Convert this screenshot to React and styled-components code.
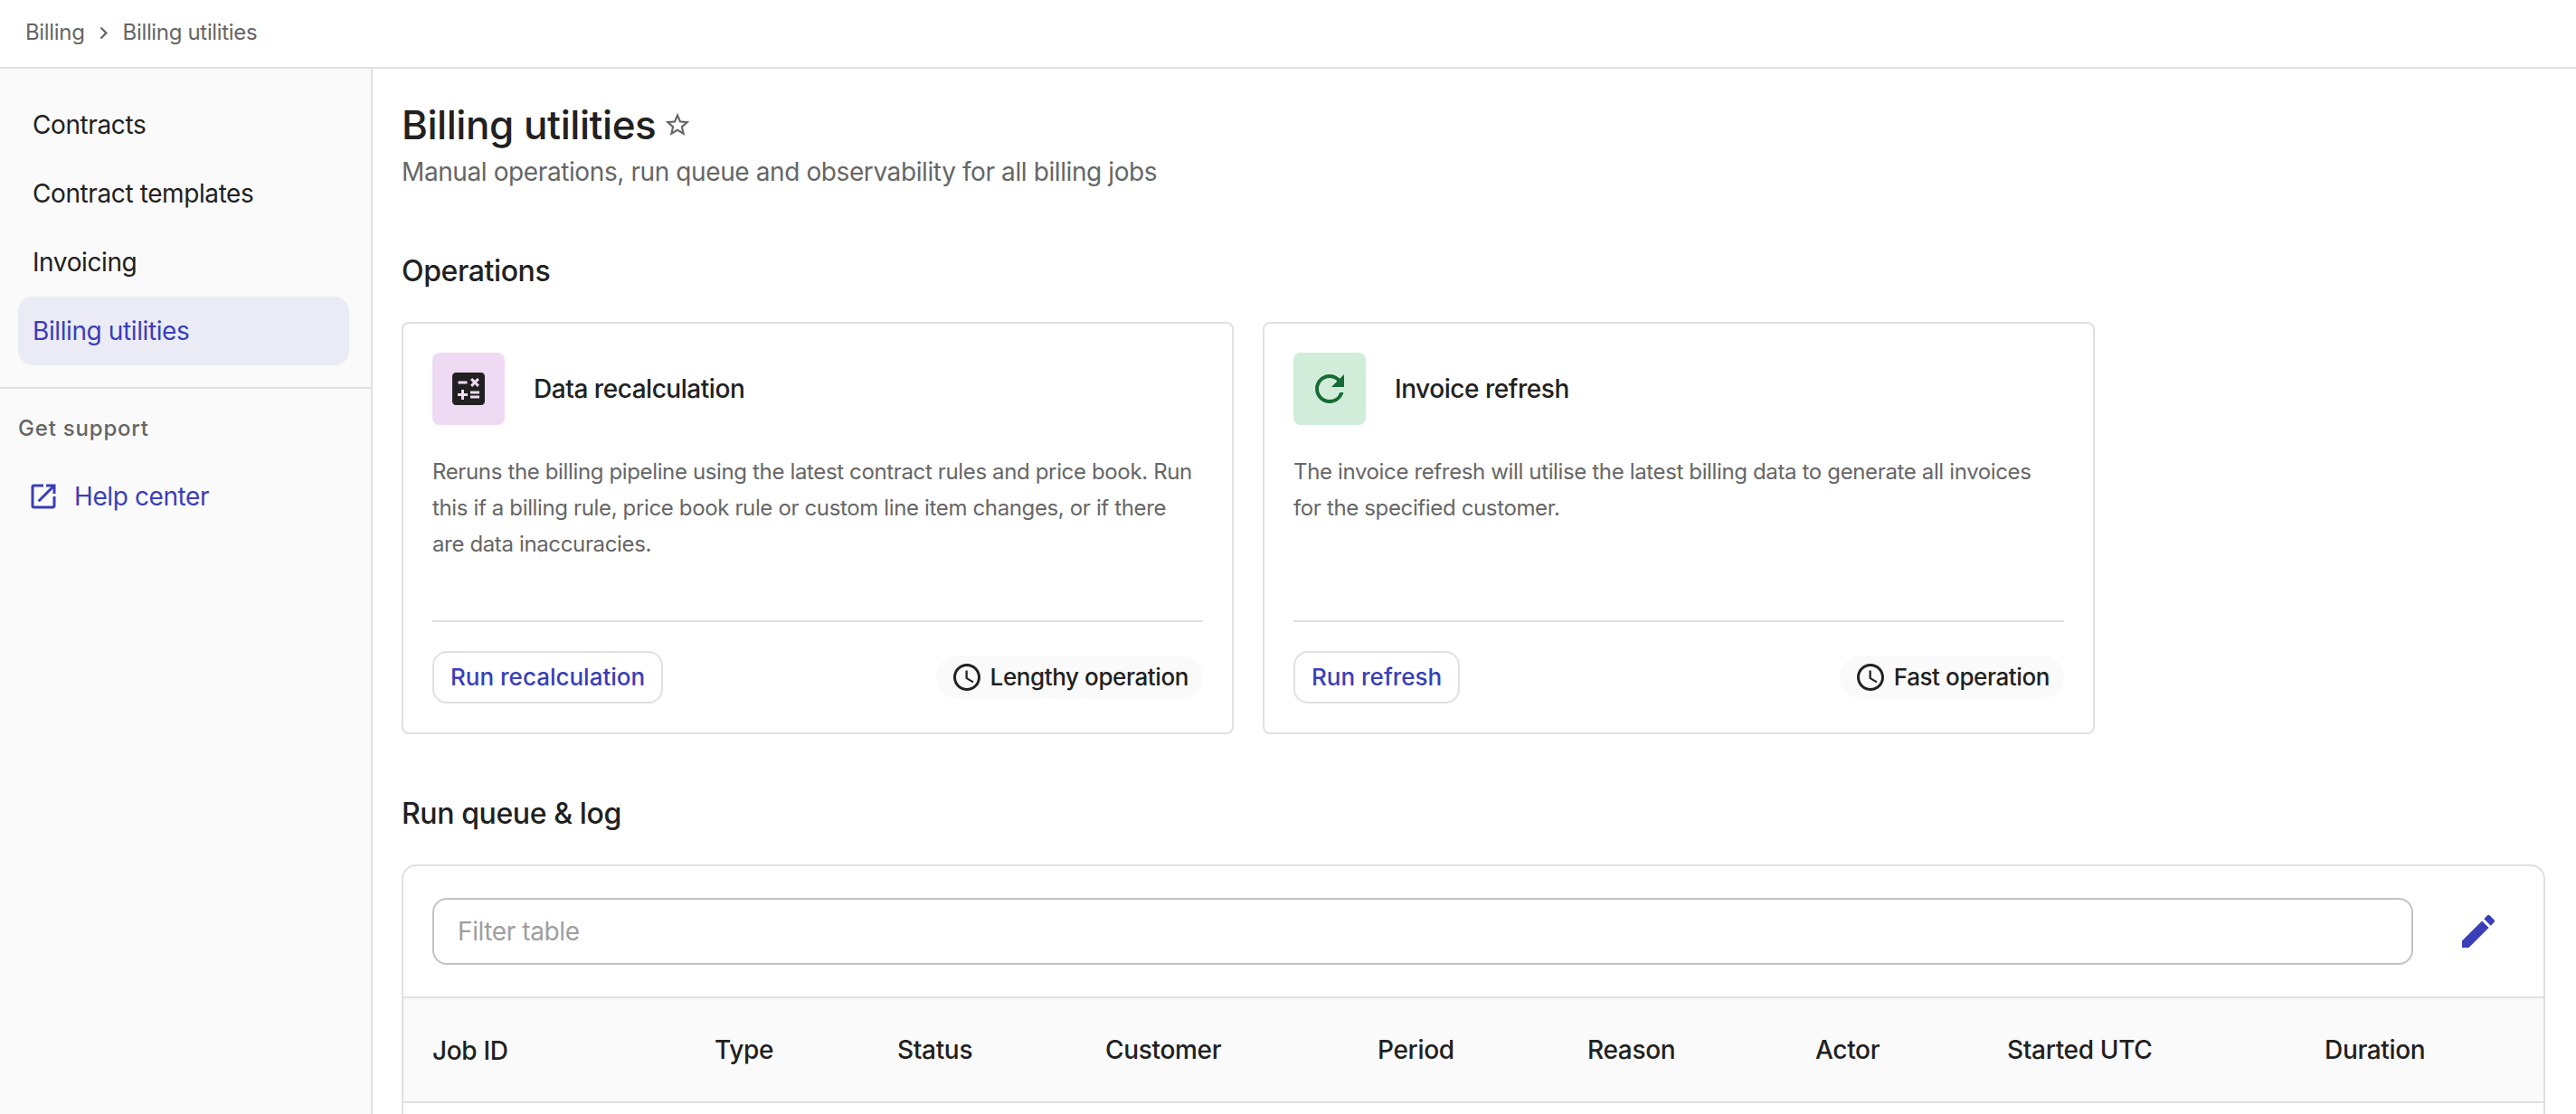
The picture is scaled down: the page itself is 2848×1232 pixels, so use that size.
import React from 'react';
import styled, { createGlobalStyle } from 'styled-components';
import {
  MdAccessTime,
  MdCalculate,
  MdChevronRight,
  MdEdit,
  MdOpenInNew,
  MdRefresh,
  MdStarBorder,
} from 'react-icons/md';

const navItems = ['Contracts', 'Contract templates', 'Invoicing', 'Billing utilities'];

const operations = [
  {
    title: 'Data recalculation',
    text: 'Reruns the billing pipeline using the latest contract rules and price book. Run this if a billing rule, price book rule or custom line item changes, or if there are data inaccuracies.',
    action: 'Run recalculation',
    speed: 'Lengthy operation',
    icon: <MdCalculate />,
    color: '#212121',
    background: '#eedbf3',
  },
  {
    title: 'Invoice refresh',
    text: 'The invoice refresh will utilise the latest billing data to generate all invoices for the specified customer.',
    action: 'Run refresh',
    speed: 'Fast operation',
    icon: <MdRefresh />,
    color: '#176b34',
    background: '#d1edda',
  },
];

const columns = ['Job ID', 'Type', 'Status', 'Customer', 'Period', 'Reason', 'Actor', 'Started UTC', 'Duration'];

export default function App() {
  return (
    <Page>
      <GlobalStyle />
      <Breadcrumbs>
        <Crumb>Billing</Crumb>
        <MdChevronRight />
        <Crumb>Billing utilities</Crumb>
      </Breadcrumbs>
      <Body>
        <Sidebar>
          <Nav>
            {navItems.map(item => (
              <NavItem key={item} $active={item === 'Billing utilities'}>{item}</NavItem>
            ))}
          </Nav>
          <Support>
            <SupportTitle>Get support</SupportTitle>
            <HelpLink>
              <MdOpenInNew />
              Help center
            </HelpLink>
          </Support>
        </Sidebar>
        <Main>
          <TitleRow>
            <Title>Billing utilities</Title>
            <MdStarBorder />
          </TitleRow>
          <Subtitle>Manual operations, run queue and observability for all billing jobs</Subtitle>
          <SectionTitle>Operations</SectionTitle>
          <Cards>
            {operations.map(op => (
              <Card key={op.title}>
                <CardHeader>
                  <IconTile $color={op.color} $background={op.background}>{op.icon}</IconTile>
                  <CardTitle>{op.title}</CardTitle>
                </CardHeader>
                <CardText>{op.text}</CardText>
                <CardFooter>
                  <ActionButton>{op.action}</ActionButton>
                  <Chip>
                    <MdAccessTime />
                    <ChipLabel>{op.speed}</ChipLabel>
                  </Chip>
                </CardFooter>
              </Card>
            ))}
          </Cards>
          <SectionTitle>Run queue &amp; log</SectionTitle>
          <Panel>
            <Toolbar>
              <FilterInput placeholder="Filter table" />
              <EditButton aria-label="Edit columns">
                <MdEdit />
              </EditButton>
            </Toolbar>
            <HeaderRow>
              {columns.map(column => (
                <HeaderCell key={column}>{column}</HeaderCell>
              ))}
            </HeaderRow>
          </Panel>
        </Main>
      </Body>
    </Page>
  );
}

const GlobalStyle = createGlobalStyle`
  * {
    box-sizing: border-box;
  }

  body {
    margin: 0;
    background: #ffffff;
    color: #212121;
    font-family: Inter, sans-serif;
    letter-spacing: -0.4px;
  }

  svg {
    flex-shrink: 0;
  }
`;

const Page = styled.div`
  display: flex;
  flex-direction: column;
  height: 1232px;
  overflow: hidden;
`;

const Breadcrumbs = styled.div`
  display: flex;
  align-items: center;
  flex-shrink: 0;
  height: 76px;
  padding: 0 28px 4px;
  border-bottom: 2px solid #e0e0e0;
  color: #666666;
  font-size: 24px;
  letter-spacing: -0.33px;

  svg {
    width: 27px;
    height: 27px;
    margin: 2px 8px 0 7px;
  }
`;

const Crumb = styled.span`
  white-space: nowrap;
`;

const Body = styled.div`
  display: flex;
  flex: 1;
  min-height: 0;
`;

const Sidebar = styled.div`
  flex-shrink: 0;
  width: 412px;
  border-right: 2px solid #e0e0e0;
  background: #fafafa;
`;

const Nav = styled.div`
  padding: 24px 24px 24px 20px;
  border-bottom: 2px solid #e0e0e0;
`;

const NavItem = styled.div`
  display: flex;
  align-items: center;
  height: 76px;
  padding: 0 16px;
  border-radius: 16px;
  background: ${props => (props.$active ? '#ebebf5' : 'transparent')};
  color: ${props => (props.$active ? '#3a3eb8' : '#212121')};
  font-size: 28px;
`;

const Support = styled.div`
  padding: 24px 20px;
`;

const SupportTitle = styled.div`
  color: #666666;
  font-size: 24px;
  font-weight: 500;
  line-height: 40px;
  letter-spacing: 0.8px;
`;

const HelpLink = styled.div`
  display: flex;
  align-items: center;
  gap: 16px;
  height: 76px;
  margin-top: 17px;
  padding-left: 10px;
  color: #3a3eb8;
  font-size: 28px;

  svg {
    width: 36px;
    height: 36px;
  }
`;

const Main = styled.div`
  flex: 1;
  padding: 32px 34px 0 32px;
`;

const TitleRow = styled.div`
  display: flex;
  align-items: center;
  gap: 8px;
  height: 60px;

  svg {
    width: 32px;
    height: 32px;
    color: #666666;
  }
`;

const Title = styled.h1`
  margin: 0;
  font-size: 44px;
  font-weight: 500;
  letter-spacing: -0.45px;
`;

const Subtitle = styled.p`
  margin: 0 0 64px;
  color: #666666;
  font-size: 28px;
  line-height: 44px;
`;

const SectionTitle = styled.h2`
  margin: 0 0 32px;
  font-size: 32px;
  font-weight: 500;
  line-height: 48px;
`;

const Cards = styled.div`
  display: grid;
  grid-template-columns: 920px 920px;
  gap: 32px;
  margin-bottom: 64px;
`;

const Card = styled.div`
  display: flex;
  flex-direction: column;
  height: 456px;
  padding: 32px;
  border: 2px solid #e0e0e0;
  border-radius: 8px;
`;

const CardHeader = styled.div`
  display: flex;
  align-items: center;
  gap: 32px;
`;

const IconTile = styled.div`
  display: flex;
  align-items: center;
  justify-content: center;
  width: 80px;
  height: 80px;
  border-radius: 8px;
  background: ${props => props.$background};
  color: ${props => props.$color};

  svg {
    width: 48px;
    height: 48px;
  }
`;

const CardTitle = styled.h3`
  margin: 0;
  font-size: 28px;
  font-weight: 500;
  letter-spacing: -0.46px;
`;

const CardText = styled.p`
  flex: 1;
  margin: 32px 0 0;
  padding-right: 8px;
  color: #666666;
  font-size: 24px;
  line-height: 40px;
  letter-spacing: -0.36px;
`;

const CardFooter = styled.div`
  display: flex;
  align-items: center;
  justify-content: space-between;
  padding-top: 32px;
  border-top: 2px solid #e0e0e0;
`;

const ActionButton = styled.button`
  height: 58px;
  padding: 0 18px 2px;
  border: 2px solid #e0e0e0;
  border-radius: 16px;
  background: #ffffff;
  color: #3a3eb8;
  font-family: inherit;
  font-size: 26px;
  font-weight: 500;
`;

const Chip = styled.div`
  display: flex;
  align-items: center;
  gap: 8px;
  height: 48px;
  padding: 0 16px;
  border-radius: 24px;
  background: #fafafa;
  font-size: 26px;
  font-weight: 500;

  svg {
    width: 36px;
    height: 36px;
  }
`;

const ChipLabel = styled.span`
  padding-bottom: 2px;
`;

const Panel = styled.div`
  height: 400px;
  border: 2px solid #e0e0e0;
  border-radius: 16px;
`;

const Toolbar = styled.div`
  display: flex;
  align-items: center;
  gap: 32px;
  height: 146px;
  padding: 0 32px;
  border-bottom: 2px solid #e0e0e0;
`;

const FilterInput = styled.input`
  flex: 1;
  height: 74px;
  padding: 0 26px;
  border: 2px solid #c2c2c2;
  border-radius: 16px;
  font-family: inherit;
  font-size: 28px;
  letter-spacing: inherit;

  &::placeholder {
    color: #9e9e9e;
  }
`;

const EditButton = styled.button`
  display: flex;
  padding: 16px;
  border: none;
  background: none;
  color: #3a3eb8;

  svg {
    width: 48px;
    height: 48px;
  }
`;

const HeaderRow = styled.div`
  display: grid;
  grid-template-columns: 312px 202px 230px 301px 232px 252px 212px 351px 1fr;
  align-items: center;
  height: 116px;
  padding-left: 32px;
  border-bottom: 2px solid #e0e0e0;
  background: #fafafa;
`;

const HeaderCell = styled.div`
  font-size: 28px;
  font-weight: 500;
  letter-spacing: -0.33px;
  white-space: nowrap;

  &:first-child {
    padding-top: 2px;
  }
`;
